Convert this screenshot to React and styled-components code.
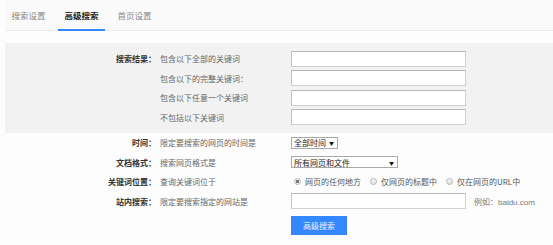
import styled, { createGlobalStyle } from "styled-components";

const GlobalStyle = createGlobalStyle`
  html, body {
    margin: 0;
    padding: 0;
    background: #fdfdfd;
  }
  body {
    font-family: "Noto Sans CJK SC", "Liberation Sans", sans-serif;
    font-size: 8px;
    color: #666;
  }
`;

const tabs = ["搜索设置", "高级搜索", "首页设置"];

const keywordRows = [
  { label: "搜索结果：", text: "包含以下全部的关键词" },
  { label: "", text: "包含以下的完整关键词：" },
  { label: "", text: "包含以下任意一个关键词" },
  { label: "", text: "不包括以下关键词" },
];

const positions = ["网页的任何地方", "仅网页的标题中", "仅在网页的URL中"];

function App() {
  return (
    <Page>
      <GlobalStyle />
      <TabBar>
        {tabs.map((t, i) => (
          <Tab key={t} active={i === 1}>{t}</Tab>
        ))}
      </TabBar>

      <Panel>
        {keywordRows.map((row, i) => (
          <Row key={i}>
            <Label>{row.label}</Label>
            <Desc>{row.text}</Desc>
            <TextInput type="text" />
          </Row>
        ))}
      </Panel>

      <Section>
        <Row>
          <Label>时间：</Label>
          <Desc>限定要搜索的网页的时间是</Desc>
          <Select width={47}>
            <span>全部时间</span>
            <Arrow>▼</Arrow>
          </Select>
        </Row>
        <Row>
          <Label>文档格式：</Label>
          <Desc>搜索网页格式是</Desc>
          <Select width={107}>
            <span>所有网页和文件</span>
            <Arrow>▼</Arrow>
          </Select>
        </Row>
        <Row>
          <Label>关键词位置：</Label>
          <Desc>查询关键词位于</Desc>
          <RadioGroup>
            {positions.map((p, i) => (
              <RadioItem key={p}>
                <Radio checked={i === 0} />
                {p}
              </RadioItem>
            ))}
          </RadioGroup>
        </Row>
        <Row>
          <Label>站内搜索：</Label>
          <Desc>限定要搜索指定的网站是</Desc>
          <Control>
            <TextInput type="text" />
            <Hint>例如：baidu.com</Hint>
          </Control>
        </Row>
        <ButtonRow>
          <SubmitButton>高级搜索</SubmitButton>
        </ButtonRow>
      </Section>
    </Page>
  );
}

const Page = styled.div`
  padding-left: 5px;
  width: 548px;
  height: 245px;
  overflow: hidden;
`;

const TabBar = styled.div`
  display: flex;
  gap: 6px;
  height: 30px;
  background: #fafafa;
  border-bottom: 1px solid #ececec;
`;

const Tab = styled.div`
  box-sizing: border-box;
  height: 31px;
  padding: 0 6.5px;
  display: flex;
  align-items: center;
  font-size: 8.5px;
  color: ${(p) => (p.active ? "#222" : "#888")};
  font-weight: ${(p) => (p.active ? 700 : 400)};
  border-bottom: 2px solid ${(p) => (p.active ? "#3388ff" : "transparent")};
  margin-bottom: -1px;
`;

const Panel = styled.div`
  margin-top: 12px;
  background: #f2f2f2;
  padding: 6px 0 6px;
`;

const Section = styled.div`
  background: #fdfdfd;
`;

const Row = styled.div`
  display: grid;
  grid-template-columns: 151px 135px 1fr;
  align-items: center;
  height: 19.5px;
`;

const Label = styled.div`
  text-align: right;
  font-weight: 700;
  color: #333;
  white-space: nowrap;
`;

const Desc = styled.div`
  padding-left: 4px;
  color: #666;
  white-space: nowrap;
`;

const TextInput = styled.input`
  box-sizing: border-box;
  width: 175px;
  height: 16px;
  margin: 0;
  background: #fff;
  border: 1px solid #d0d0d0;
  border-top-color: #b8b8b8;
  border-left-color: #c4c4c4;
  outline: none;
`;

const Select = styled.div`
  box-sizing: border-box;
  width: ${(p) => p.width}px;
  height: 12px;
  display: flex;
  align-items: center;
  justify-content: space-between;
  padding: 0 3px 0 2px;
  background: #fff;
  border: 1px solid #a9a9a9;
  color: #222;
  font-size: 8px;
`;

const Arrow = styled.span`
  font-size: 5px;
  color: #111;
`;

const RadioGroup = styled.div`
  display: flex;
  align-items: center;
  gap: 6px;
`;

const RadioItem = styled.label`
  display: flex;
  align-items: center;
  gap: 4px;
  color: #555;
  white-space: nowrap;
`;

const Radio = styled.span`
  box-sizing: border-box;
  width: 7px;
  height: 7px;
  border-radius: 50%;
  border: 1px solid #b5b5b5;
  background: ${(p) =>
    p.checked
      ? "radial-gradient(circle, #777 0 1.6px, #f4f4f4 1.8px)"
      : "linear-gradient(#f6f6f6, #e2e2e2)"};
  margin-left: 3px;
`;

const Control = styled.div`
  display: flex;
  align-items: center;
  gap: 8px;
`;

const Hint = styled.span`
  color: #777;
  font-family: "Liberation Sans", "Noto Sans CJK SC", sans-serif;
`;

const ButtonRow = styled.div`
  padding-left: 286px;
  margin-top: 5px;
`;

const SubmitButton = styled.button`
  width: 56px;
  height: 19px;
  border: none;
  padding: 0;
  background: #3388ff;
  color: #eaf2ff;
  font-family: "Noto Sans CJK SC", sans-serif;
  font-size: 8px;
`;

export default App;
